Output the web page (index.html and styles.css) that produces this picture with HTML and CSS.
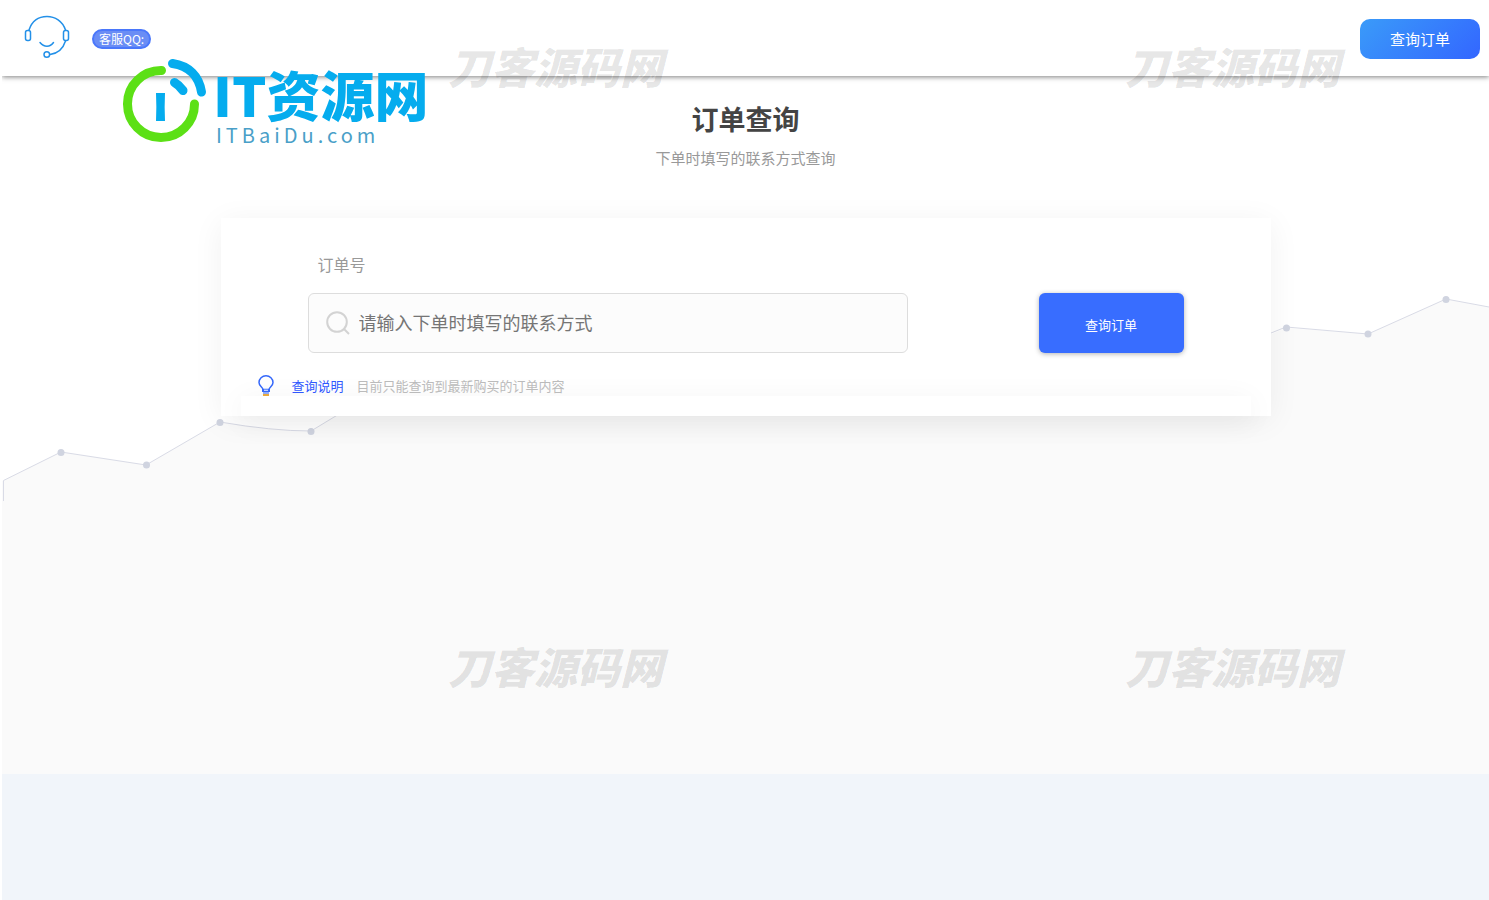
FILE: index.html
```html
<!DOCTYPE html>
<html lang="zh-CN">
<head>
<meta charset="utf-8">
<meta name="viewport" content="width=device-width, initial-scale=1">
<title>订单查询</title>
<link rel="stylesheet" href="styles.css">
</head>
<body>
<header class="topbar">
  <div class="service">
    <svg class="headset" viewBox="0 0 46 44" width="46" height="44" aria-hidden="true">
      <g fill="none" stroke="#2390e8" stroke-width="1.500" stroke-linecap="round">
        <path d="M5 15C8 6 15 1.500 23 1.500S38.500 6 41.500 15"/>
        <rect x="1.500" y="15.500" width="5" height="10" rx="2"/>
        <rect x="39.500" y="15.500" width="5" height="10" rx="2"/>
        <path d="M41.500 26C39 34 33.500 38.500 26 39.500"/>
        <circle cx="22.800" cy="39.500" r="2.800"/>
        <path d="M16 27.500C20 32.500 26 32.500 29.500 27.500"/>
      </g>
    </svg>
    <span class="qq">客服QQ:</span>
  </div>
  <a class="order-link" href="#query">查询订单</a>
</header>

<main class="hero">
  <svg class="chart" viewBox="0 0 1487 698" preserveAspectRatio="xMinYMin slice" aria-hidden="true">
    <path fill="#fafafa" d="M0 405L59 376L144 389L218 346Q270 355 309 355L380 312L700 280L1100 330L1284 252L1366 258L1444 223L1487 231V698H0Z"/>
    <path fill="none" stroke="#d9dbe6" d="M1.500 425V404.500L59 376L144 389L218 346Q270 355 309 355L380 312L700 280L1100 330L1269 257L1284 251L1366 258L1444 223L1487 231"/>
    <g fill="#d0d4e0">
      <circle cx="59" cy="376.500" r="3.500"/><circle cx="144.500" cy="389" r="3.500"/><circle cx="218" cy="346.500" r="3.500"/><circle cx="309" cy="355.500" r="3.500"/><circle cx="1284.500" cy="252" r="3.500"/><circle cx="1366" cy="258" r="3.500"/><circle cx="1444" cy="223.500" r="3.500"/>
    </g>
  </svg>
  <div class="heading">
    <h1>订单查询</h1>
    <p>下单时填写的联系方式查询</p>
  </div>
  <section class="card" id="query">
    <form class="form">
      <label for="contact">订单号</label>
      <div class="row">
        <div class="field">
          <svg viewBox="0 0 24 24" width="24" height="24" aria-hidden="true"><g fill="none" stroke="#d3d3d3" stroke-width="2"><circle cx="11" cy="11" r="9.800"/><path d="M17.500 17.500L23 23"/></g></svg>
          <input id="contact" type="text" placeholder="请输入下单时填写的联系方式">
        </div>
        <button type="submit">查询订单</button>
      </div>
    </form>
    <div class="hint">
      <svg viewBox="0 0 16 21" width="16" height="21" aria-hidden="true">
        <path d="M5 14.500C4.500 12 1 11 1 7.500A7 6.700 0 0 1 15 7.500C15 11 11.500 12 11 14.500Z" fill="none" stroke="#3568fa" stroke-width="1.500"/>
        <path d="M4 14h8v3H4z" fill="#3568fa"/><path d="M6 14.700h4v1H6z" fill="#fff"/>
        <path d="M5 17h6v2H5z" fill="#8eaaf8"/><path d="M5 19h6v2H5z" fill="#e9a93c"/>
      </svg>
      <strong>查询说明</strong>
      <span>目前只能查询到最新购买的订单内容</span>
    </div>
    <div class="result"></div>
  </section>
</main>

<div class="site-logo">
  <svg viewBox="0 0 84 84" width="84" height="84" aria-hidden="true">
    <g fill="none" stroke-width="9" stroke-linecap="round">
      <path stroke="#5ce016" d="M38.500 12.500A33.500 33.500 0 1 0 71.500 46"/>
      <path stroke="#05acee" d="M49.500 5.500C66 8 76 18 78.500 34"/>
      <path stroke="#05acee" d="M51.500 24.500Q56 27 60 32.500"/>
    </g>
    <path fill="#05acee" d="M33 35h9q-.7 14 0 28h-9q.7-14 0-28z"/>
  </svg>
  <div class="logo-text">
    <span class="logo-name">IT资源网</span>
    <span class="logo-domain">ITBaiDu.com</span>
  </div>
</div>

<div class="watermarks" aria-hidden="true">
  <span>刀客源码网</span><span>刀客源码网</span>
  <span>刀客源码网</span><span>刀客源码网</span>
</div>
</body>
</html>
```
FILE: styles.css
```css
* { box-sizing: border-box; }

body {
  margin: 0 0 0 2px;
  min-height: 100vh;
  display: flex;
  flex-direction: column;
  position: relative;
  background: #fff;
  font-family: "Noto Sans CJK SC", sans-serif;
}

.topbar {
  position: relative;
  z-index: 1;
  height: 76px;
  padding: 0 9px 0 22px;
  display: flex;
  align-items: center;
  justify-content: space-between;
  background: #fff;
  box-shadow: 0 1px 5px rgba(0, 0, 0, .5);
}

.service {
  display: flex;
  align-items: center;
  gap: 22px;
  padding-top: 2px;
}

.headset { display: block; margin-bottom: 4px; }

.qq {
  height: 20px;
  padding: 0 5px;
  border: 2px solid #4a77fb;
  border-radius: 10px;
  background: #6a8df5;
  color: #fff;
  font-size: 12px;
  line-height: 16px;
}

.order-link {
  width: 120px;
  height: 40px;
  margin-top: 2px;
  border-radius: 10px;
  background: linear-gradient(135deg, #3a9bf9, #3366ff);
  color: #fff;
  font-size: 15px;
  line-height: 40px;
  text-align: center;
  text-decoration: none;
}

.hero {
  position: relative;
  height: 698px;
  padding: 23px 20px 0;
}

.chart {
  position: absolute;
  inset: 0;
  width: 100%;
  height: 100%;
}

.heading { position: relative; text-align: center; }

.heading h1 {
  margin: 0;
  color: #444;
  font-size: 27px;
  line-height: 40px;
}

.heading p {
  margin: 8px 0 0;
  color: #999;
  font-size: 15px;
  line-height: 22px;
}

.card {
  position: relative;
  max-width: 1050px;
  margin: 49px auto 0;
  padding-top: 34px;
  background: #fff;
  box-shadow: 0 5px 30px rgba(0, 0, 0, .06);
}

.form { padding: 0 87px; }

.form label {
  display: block;
  padding-left: 10px;
  color: #999;
  font-size: 16px;
  line-height: 24px;
}

.row {
  display: flex;
  justify-content: space-between;
  gap: 20px;
  margin-top: 17px;
}

.field {
  flex: 0 1 600px;
  height: 60px;
  padding: 0 17px;
  display: flex;
  align-items: center;
  gap: 9px;
  border: 1px solid #ddd;
  border-radius: 6px;
  background: #fcfcfc;
}

.field svg { flex: none; }

.field input {
  flex: 1;
  min-width: 0;
  height: 40px;
  padding: 0 0 2px;
  border: 0;
  outline: 0;
  background: transparent;
  color: #444;
  font: inherit;
  font-size: 18px;
}

.field input::placeholder { color: #757575; }

.row button {
  width: 145px;
  height: 60px;
  padding: 2px 0 0;
  border: 0;
  border-radius: 6px;
  background: #386dff;
  box-shadow: 0 1px 5px rgba(0, 0, 0, .3);
  color: #fff;
  font: inherit;
  font-size: 13px;
}

.hint {
  display: flex;
  align-items: center;
  margin-top: 22px;
  padding-left: 37px;
  font-size: 13px;
  line-height: 21px;
}

.hint strong {
  margin: 0 13px 0 18px;
  color: #3058ff;
  font-weight: 400;
}

.hint span { color: #bbb; }

.result {
  height: 20px;
  margin: 0 20px;
  background: #fff;
  box-shadow: 0 5px 30px rgba(0, 0, 0, .06);
}

body::after {
  content: "";
  flex: 1;
  background: #f1f5fa;
}

.site-logo {
  position: absolute;
  z-index: 2;
  top: 58px;
  left: 121px;
  display: flex;
  gap: 6px;
}

.logo-text {
  display: flex;
  flex-direction: column;
  gap: 2px;
  margin-top: 9px;
}

.logo-name {
  color: #05acee;
  font-size: 54px;
  font-weight: 900;
  line-height: 54px;
}

.logo-domain {
  padding-left: 3px;
  color: #4a9fc8;
  font-size: 20px;
  line-height: 24px;
  letter-spacing: 4px;
}

.watermarks {
  position: absolute;
  z-index: 3;
  inset: 0;
  overflow: hidden;
  pointer-events: none;
  display: grid;
  grid-template-columns: 677px 677px;
  grid-auto-rows: 600px;
  padding: 35px 0 0 446px;
}

.watermarks span {
  color: rgba(0, 0, 0, .11);
  font-size: 43px;
  font-style: italic;
  font-weight: 900;
  line-height: 60px;
  white-space: nowrap;
}
```
